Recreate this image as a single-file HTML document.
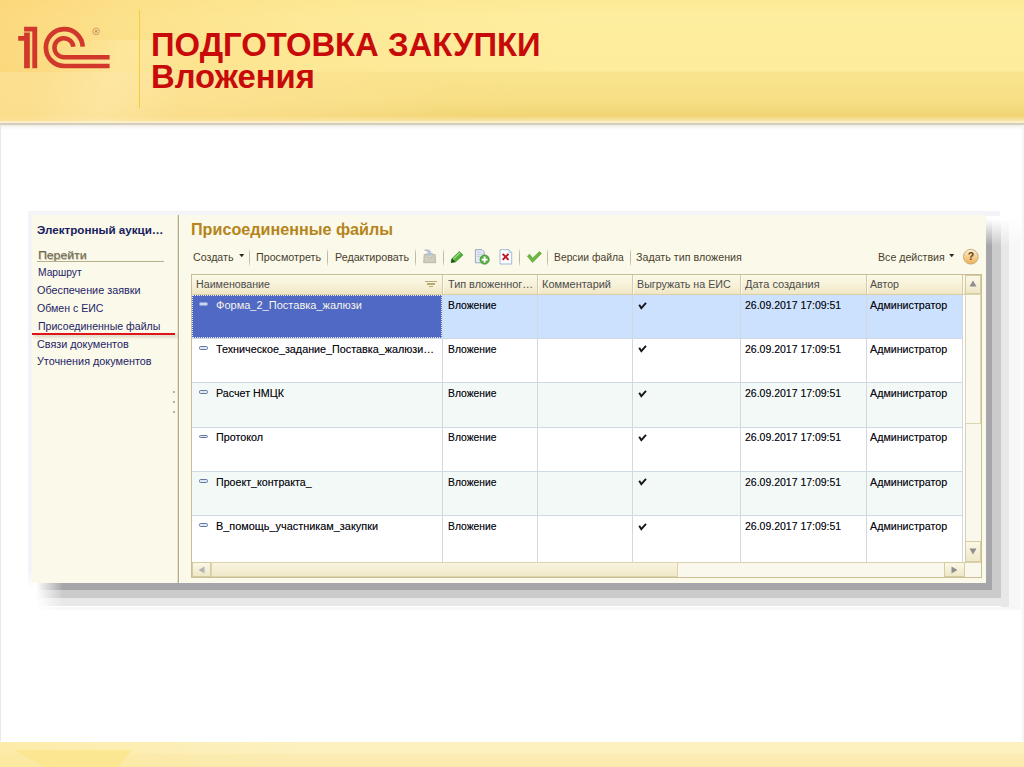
<!DOCTYPE html>
<html lang="ru"><head><meta charset="utf-8"><title>Подготовка закупки — Вложения</title>
<style>
*{margin:0;padding:0;box-sizing:border-box}
html,body{width:1024px;height:767px;overflow:hidden;background:#fff}
body{font-family:"Liberation Sans",sans-serif;position:relative}
.a,.t{position:absolute}
.t{white-space:nowrap;font-size:11.7px;line-height:14px;transform-origin:0 50%}
#hdr{left:0;top:0;width:1024px;height:121px;background:linear-gradient(to bottom,#fdea96 0,#fdee9f 18px,#fdec9b 71px,#f9e48d 72.5px,#f7df85 100px,#f1d574 116px,#f3dc8c 118px,#f8e6a8 121px)}
#hdrL{left:0;top:0;width:560px;height:121px;background:linear-gradient(to right,rgba(250,200,100,.55) 0,rgba(252,212,120,.45) 140px,rgba(253,222,135,.28) 320px,rgba(253,230,150,0) 560px)}
#hline1{left:0;top:120.8px;width:1024px;height:2px;background:#fcefc8}
#hline2{left:0;top:122.7px;width:1024px;height:7px;background:linear-gradient(to bottom,#d2ccbc 0,#d6d0c2 2px,#f4f2ec 2.6px,#ffffff 7px)}
#vbar{left:139px;top:10px;width:1px;height:98px;background:#f5cd3a}
.ttl{left:151px;color:#c80a0a;font-weight:bold;font-size:32.8px;line-height:32px;white-space:nowrap}
#foot{left:0;top:741.5px;width:1024px;height:26px;background:linear-gradient(to bottom,#fdf1c2 0,#fdf0be 11px,#fbecb3 12.5px,#fbeaae 26px)}
#lb{left:0;top:125px;width:1px;height:616px;background:#e8e8e8}
#rb{left:1022px;top:125px;width:2px;height:616px;background:#f5f5f5}
#shot{left:32px;top:215.3px;width:954.2px;height:368.1px;background:#fbf9ea}
.sep{width:1px;top:248.5px;height:17.5px;background:linear-gradient(to bottom,rgba(190,186,165,.2),#bfbba6 25%,#bfbba6 75%,rgba(190,186,165,.2))}
.vl{width:1px;background:#d0d8e0}
.hl{height:1px;background:#d0d8e0;left:192px;width:770px}
</style></head><body>
<div id="hdr" class="a"></div>
<div id="hdrL" class="a"></div>
<div class="a" style="left:0;top:72px;width:460px;height:49px;background:linear-gradient(to right,rgba(254,230,160,.62) 0,rgba(254,230,160,.5) 200px,rgba(254,230,160,0) 460px)"></div>
<div class="a" style="left:0;top:40px;width:260px;height:81px;background:linear-gradient(115deg,rgba(255,240,190,0) 20%,rgba(255,240,190,.35) 45%,rgba(255,240,190,0) 70%)"></div>
<div id="hline1" class="a"></div>
<div id="hline2" class="a"></div>
<div id="vbar" class="a"></div>
<svg class="a" style="left:0;top:0" width="130" height="90" viewBox="0 0 130 90">
 <g fill="#d1382b">
  <path d="M24.1 26.7H37.2V68.3H32.3V31.4H24.1Z"/>
  <path d="M18.2 36.1H24.1V32.5H29.8V68.3H24.1V40.8H18.2Z"/>
 </g>
 <g fill="none" stroke="#d1382b" stroke-width="4.7">
  <path d="M82.7 46.6A18.4 18.4 0 1 0 64.3 66H109.6"/>
  <path d="M73.4 46.8A9.5 9.5 0 1 0 63.9 57.2H109.6" stroke-width="4.5"/>
 </g>
 <circle cx="96.1" cy="31.4" r="3.3" fill="none" stroke="#c98a5e" stroke-width="0.8"/>
 <text x="96.1" y="33" font-size="4" text-anchor="middle" fill="#c07a50" font-family="Liberation Sans" font-weight="bold">R</text>
</svg>
<div class="a ttl" id="t1" style="top:28.6px">ПОДГОТОВКА ЗАКУПКИ</div>
<div class="a ttl" id="t2" style="top:60.5px">Вложения</div>
<div id="lb" class="a"></div><div id="rb" class="a"></div>
<div id="foot" class="a"></div>
<div class="a" style="left:0;top:741.5px;width:300px;height:26px;background:linear-gradient(to right,rgba(252,232,150,.55),rgba(252,232,150,0))"></div>
<div class="a" style="left:14px;top:750px;width:118px;height:17px;background:#fbe58c;opacity:.8;clip-path:polygon(0 0,100% 0,88% 100%,26% 100%)"></div>

<!-- soft frame + stepped shadow -->
<div class="a" style="left:28px;top:211px;width:972px;height:5px;background:#f4f3f8"></div>
<div class="a" style="left:28px;top:211px;width:5px;height:378px;background:linear-gradient(to bottom,#f4f3f8 0,#f4f3f8 360px,#fff 378px)"></div>
<div class="a" style="left:986.2px;top:219px;width:6.0px;height:370.8px;background:linear-gradient(to bottom,rgba(255,255,255,0) 0,#a6a6aa 27px)"></div>
<div class="a" style="left:36px;top:583.4px;width:950.2px;height:6.4px;background:linear-gradient(to right,rgba(255,255,255,0) 0,#a6a6aa 27px)"></div>
<div class="a" style="left:992.2px;top:219px;width:8.8px;height:379.2px;background:linear-gradient(to bottom,rgba(255,255,255,0) 0,#cbcbcb 27px)"></div>
<div class="a" style="left:36px;top:589.8px;width:956.2px;height:8.4px;background:linear-gradient(to right,rgba(255,255,255,0) 0,#cbcbcb 27px)"></div>
<div class="a" style="left:1001px;top:219px;width:7.5px;height:387.5px;background:linear-gradient(to bottom,rgba(255,255,255,0) 0,#e8e8e8 27px)"></div>
<div class="a" style="left:36px;top:598.2px;width:965.0px;height:8.3px;background:linear-gradient(to right,rgba(255,255,255,0) 0,#e8e8e8 27px)"></div>
<div class="a" style="left:1008.5px;top:219px;width:12.5px;height:391.0px;background:linear-gradient(to bottom,rgba(255,255,255,0) 0,#f7f7f7 27px)"></div>
<div class="a" style="left:36px;top:606.5px;width:972.5px;height:3.5px;background:linear-gradient(to right,rgba(255,255,255,0) 0,#f8f8f8 27px)"></div>
<div id="shot" class="a"></div>
<!-- sidebar divider -->
<div class="a" style="left:177px;top:215.3px;width:1px;height:368.1px;background:#e9e4cc"></div>
<div class="a" style="left:178px;top:215.3px;width:1px;height:368.1px;background:#b3ab8a"></div>
<div class="a" style="left:179px;top:215.3px;width:1px;height:368.1px;background:#fffef6"></div>
<!-- "Перейти" underline -->
<div class="a" style="left:37px;top:261px;width:127px;height:1px;background:#b7ae8c"></div>
<!-- red annotation line -->
<div class="a" style="left:32px;top:333.3px;width:143px;height:1.6px;background:#e0151b;box-shadow:2px 2px 3px rgba(120,110,80,.35)"></div>
<!-- splitter dots -->
<div class="a" style="left:173px;top:391px;width:2px;height:2px;background:#b8b39c"></div>
<div class="a" style="left:173px;top:401px;width:2px;height:2px;background:#b8b39c"></div>
<div class="a" style="left:173px;top:411px;width:2px;height:2px;background:#b8b39c"></div>

<!-- toolbar separators -->
<div class="a sep" style="left:249px"></div>
<div class="a sep" style="left:327px"></div>
<div class="a sep" style="left:415px"></div>
<div class="a sep" style="left:443px"></div>
<div class="a sep" style="left:519px"></div>
<div class="a sep" style="left:547px"></div>
<div class="a sep" style="left:630px"></div>
<!-- dropdown arrows -->
<svg class="a" style="left:238.6px;top:254.2px" width="6" height="4"><path d="M0.2 0H5.2L2.7 3.3Z" fill="#2a2a2a"/></svg>
<svg class="a" style="left:948.9px;top:254.2px" width="6" height="4"><path d="M0.2 0H5.2L2.7 3.3Z" fill="#2a2a2a"/></svg>
<!-- toolbar icons -->
<svg class="a" style="left:420px;top:246px" width="125" height="22" viewBox="420 246 125 22">
 <defs>
  <linearGradient id="gq" x1="0" y1="0" x2="0" y2="1"><stop offset="0" stop-color="#faf1dd"/><stop offset=".45" stop-color="#f5d294"/><stop offset="1" stop-color="#efb25c"/></linearGradient>
  <linearGradient id="gp" x1="0" y1="0" x2="1" y2="1"><stop offset="0" stop-color="#7fd45a"/><stop offset="1" stop-color="#2f9a1e"/></linearGradient>
 </defs>
 <!-- inbox (disabled) -->
 <path d="M424.2 254.5H427L428 257.3H431.3L432.3 254.5H435.2L435.7 262.7H423.7Z" fill="#cfcdc0" stroke="#b3b1a2" stroke-width=".8"/>
 <path d="M424.4 250.2C428.5 249 431 250.5 430.6 253.2H432.6L429.6 256.6L426.6 253.2H428.6C428.8 251.4 427 250.6 424.4 250.2Z" fill="#b4c6d8" stroke="#9db1c6" stroke-width=".5"/>
 <!-- pencil -->
 <path d="M451 262.5L452 258.6L459.4 251.6L462.9 255.1L455.4 261.9Z" fill="url(#gp)" stroke="#2f8a22" stroke-width=".7"/>
 <path d="M451 262.5L452 258.6L455.4 261.9Z" fill="#27481f"/>
 <path d="M453.4 258.9L460 252.9" stroke="#b9f09a" stroke-width="1" fill="none"/>
 <!-- doc + plus -->
 <path d="M475.4 249.6H482L484.2 251.8V262.8H475.4Z" fill="#e4ebf2" stroke="#8fa1b8" stroke-width=".9"/>
 <path d="M477 252.2H481M477 254.4H482.5M477 256.6H480" stroke="#b7c4d4" stroke-width=".8"/>
 <circle cx="484.6" cy="259.6" r="4.6" fill="#57b044" stroke="#3d8a30" stroke-width=".8"/>
 <path d="M484.6 256.6V262.6M481.6 259.6H487.6" stroke="#fff" stroke-width="1.9"/>
 <!-- doc + red x -->
 <path d="M500 249.7H509L511.7 252.4V264H500Z" fill="#fdfeff" stroke="#9fbad8" stroke-width="1"/>
 <path d="M509 249.7V252.4H511.7" fill="none" stroke="#9fbad8" stroke-width=".8"/>
 <path d="M502.6 253.9L508.6 259.9M508.6 253.9L502.6 259.9" stroke="#c3172a" stroke-width="2"/>
 <!-- green check -->
 <path d="M527.4 256.2L529.6 254.2L532.6 258.2L539.4 251.6L541.5 253.4L532.6 262.6Z" fill="#6db83f" stroke="#4f9a2c" stroke-width=".6"/>
</svg>
<!-- help -->
<svg class="a" style="left:962px;top:248px" width="18" height="18" viewBox="0 0 18 18">
 <circle cx="8.8" cy="8.7" r="7.4" fill="url(#gq)" stroke="#c7a774" stroke-width=".9"/>
 <text x="8.9" y="12.3" font-size="10.5" font-weight="bold" text-anchor="middle" fill="#6b3d14" font-family="Liberation Sans, sans-serif">?</text>
</svg>


<!-- table -->
<div class="a" id="tbl" style="left:191px;top:274px;width:791px;height:304px;background:#fff;border:1px solid #c9be92"></div>
<div class="a" id="thead" style="left:192px;top:275px;width:789px;height:19.5px;background:linear-gradient(to bottom,#fcf9e9 0,#f6f0d6 55%,#eee5c2 100%)"></div>
<!-- rows -->
<div class="a" style="left:192px;top:294.5px;width:770px;height:43.7px;background:#cbe1fd"></div>
<div class="a" style="left:192px;top:294.5px;width:250px;height:43.7px;background:#4f69c4;outline:1px dotted #e8ecff;outline-offset:-1px"></div>
<div class="a" style="left:192px;top:382.7px;width:770px;height:44.3px;background:#f3f9f6"></div>
<div class="a" style="left:192px;top:471.3px;width:770px;height:44.2px;background:#f3f9f6"></div>
<!-- horizontal grid -->
<div class="a hl" style="top:338px"></div>
<div class="a hl" style="top:382px"></div>
<div class="a hl" style="top:427px"></div>
<div class="a hl" style="top:471px"></div>
<div class="a hl" style="top:515px"></div>
<!-- vertical grid -->
<div class="a vl" style="left:442px;top:275px;height:287px"></div>
<div class="a vl" style="left:537px;top:275px;height:287px"></div>
<div class="a vl" style="left:632px;top:275px;height:287px"></div>
<div class="a vl" style="left:740px;top:275px;height:287px"></div>
<div class="a vl" style="left:866px;top:275px;height:287px"></div>
<div class="a vl" style="left:962px;top:275px;height:287px"></div>
<!-- header vertical separators -->
<div class="a" style="left:442px;top:275px;width:1px;height:19px;background:#d3cba6"></div><div class="a" style="left:443px;top:275px;width:1px;height:19px;background:#fdfbf0"></div><div class="a" style="left:537px;top:275px;width:1px;height:19px;background:#d3cba6"></div><div class="a" style="left:538px;top:275px;width:1px;height:19px;background:#fdfbf0"></div><div class="a" style="left:632px;top:275px;width:1px;height:19px;background:#d3cba6"></div><div class="a" style="left:633px;top:275px;width:1px;height:19px;background:#fdfbf0"></div><div class="a" style="left:740px;top:275px;width:1px;height:19px;background:#d3cba6"></div><div class="a" style="left:741px;top:275px;width:1px;height:19px;background:#fdfbf0"></div><div class="a" style="left:866px;top:275px;width:1px;height:19px;background:#d3cba6"></div><div class="a" style="left:867px;top:275px;width:1px;height:19px;background:#fdfbf0"></div><div class="a" style="left:962px;top:275px;width:1px;height:19px;background:#d3cba6"></div><div class="a" style="left:963px;top:275px;width:1px;height:19px;background:#fdfbf0"></div>
<div class="a" style="left:192px;top:294px;width:789px;height:1px;background:#d8cfa8"></div>
<!-- v scrollbar -->
<div class="a" style="left:965px;top:275px;width:16px;height:287px;background:#faf8ec;border-left:1px solid #d9d1ad"></div>
<div class="a" style="left:965px;top:275px;width:16px;height:19px;background:linear-gradient(#fbf8e8,#efe7c6);border:1px solid #d5cca4"></div>
<div class="a" style="left:965px;top:294px;width:16px;height:130px;background:#fbf9ee;border:1px solid #ddd5b2"></div>
<div class="a" style="left:965px;top:541px;width:16px;height:21px;background:linear-gradient(#fbf8e8,#efe7c6);border:1px solid #d5cca4"></div>
<svg class="a" style="left:969px;top:280px" width="8" height="7"><path d="M4 0.5L7.5 6.5H0.5Z" fill="#8e8e8e"/></svg>
<svg class="a" style="left:969px;top:548px" width="8" height="7"><path d="M0.5 0.5H7.5L4 6.5Z" fill="#8e8e8e"/></svg>
<!-- h scrollbar -->
<div class="a" style="left:192px;top:562px;width:789px;height:15px;background:#faf8ec;border-top:1px solid #d9d1ad"></div>
<div class="a" style="left:211px;top:562px;width:467px;height:15px;background:linear-gradient(#f9f4df,#f0e8c8);border:1px solid #ddd4ae"></div>
<div class="a" style="left:192px;top:562px;width:19px;height:15px;background:linear-gradient(#fbf8e8,#efe7c6);border:1px solid #d5cca4"></div>
<div class="a" style="left:944px;top:562px;width:21px;height:15px;background:linear-gradient(#fbf8e8,#efe7c6);border:1px solid #d5cca4"></div>
<svg class="a" style="left:198px;top:566px" width="7" height="8"><path d="M6.5 0.5V7.5L0.5 4Z" fill="#b5b5b5"/></svg>
<svg class="a" style="left:951px;top:566px" width="7" height="8"><path d="M0.5 0.5V7.5L6.5 4Z" fill="#8e8e8e"/></svg>
<!-- sort icon in header -->
<div class="a" style="left:425px;top:280.6px;width:11.5px;height:1.4px;background:#b6ab72"></div>
<div class="a" style="left:427px;top:283.2px;width:7.5px;height:1.4px;background:#b6ab72"></div>
<div class="a" style="left:428.7px;top:285.8px;width:4.1px;height:1.4px;background:#b6ab72"></div>

<div class="a" style="left:199px;top:302.2px;width:9.2px;height:3.6px;border-radius:1.6px;background:#c9d6ee;border:0.6px solid #8fa3d8"></div>
<svg class="a" style="left:637px;top:300.5px" width="12" height="10" viewBox="0 0 12 10"><path d="M2.2 3.8L4.3 7.2L9 1.9" fill="none" stroke="#151515" stroke-width="1.9" stroke-linejoin="miter"/></svg>
<div class="a" style="left:199px;top:345.9px;width:9.2px;height:3.8px;border-radius:1.6px;background:#dfe8f5;border:1px solid #64779f"></div>
<svg class="a" style="left:637px;top:344.2px" width="12" height="10" viewBox="0 0 12 10"><path d="M2.2 3.8L4.3 7.2L9 1.9" fill="none" stroke="#151515" stroke-width="1.9" stroke-linejoin="miter"/></svg>
<div class="a" style="left:199px;top:390.4px;width:9.2px;height:3.8px;border-radius:1.6px;background:#dfe8f5;border:1px solid #64779f"></div>
<svg class="a" style="left:637px;top:388.7px" width="12" height="10" viewBox="0 0 12 10"><path d="M2.2 3.8L4.3 7.2L9 1.9" fill="none" stroke="#151515" stroke-width="1.9" stroke-linejoin="miter"/></svg>
<div class="a" style="left:199px;top:434.7px;width:9.2px;height:3.8px;border-radius:1.6px;background:#dfe8f5;border:1px solid #64779f"></div>
<svg class="a" style="left:637px;top:433.0px" width="12" height="10" viewBox="0 0 12 10"><path d="M2.2 3.8L4.3 7.2L9 1.9" fill="none" stroke="#151515" stroke-width="1.9" stroke-linejoin="miter"/></svg>
<div class="a" style="left:199px;top:479.0px;width:9.2px;height:3.8px;border-radius:1.6px;background:#dfe8f5;border:1px solid #64779f"></div>
<svg class="a" style="left:637px;top:477.3px" width="12" height="10" viewBox="0 0 12 10"><path d="M2.2 3.8L4.3 7.2L9 1.9" fill="none" stroke="#151515" stroke-width="1.9" stroke-linejoin="miter"/></svg>
<div class="a" style="left:199px;top:523.2px;width:9.2px;height:3.8px;border-radius:1.6px;background:#dfe8f5;border:1px solid #64779f"></div>
<svg class="a" style="left:637px;top:521.5px" width="12" height="10" viewBox="0 0 12 10"><path d="M2.2 3.8L4.3 7.2L9 1.9" fill="none" stroke="#151515" stroke-width="1.9" stroke-linejoin="miter"/></svg>
<div class="t" style="left:37.2px;top:223.43px;color:#16205e;font-weight:bold;transform:scaleX(0.9953);">Электронный аукци…</div>
<div class="t" style="left:37.5px;top:247.83px;color:#6e684f;transform:scaleX(1.0472);text-shadow:0.6px 0.6px 0 #b9b39a;">Перейти</div>
<div class="t" style="left:37.5px;top:265.33px;color:#1b2466;transform:scaleX(0.8773);">Маршрут</div>
<div class="t" style="left:37.2px;top:283.33px;color:#1b2466;transform:scaleX(0.9267);">Обеспечение заявки</div>
<div class="t" style="left:37.2px;top:301.13px;color:#1b2466;transform:scaleX(0.9048);">Обмен с ЕИС</div>
<div class="t" style="left:37.5px;top:319.13px;color:#1b2466;transform:scaleX(0.9034);">Присоединенные файлы</div>
<div class="t" style="left:37.2px;top:336.73px;color:#1b2466;transform:scaleX(0.9245);">Связи документов</div>
<div class="t" style="left:37.3px;top:354.43px;color:#1b2466;transform:scaleX(0.9256);">Уточнения документов</div>
<div class="t" style="left:190.7px;top:218.79px;color:#b5841a;font-weight:bold;font-size:16.3px;line-height:20px;transform:scaleX(0.9919);">Присоединенные файлы</div>
<div class="t" style="left:193.2px;top:249.53px;color:#4a3f2d;transform:scaleX(0.9117);">Создать</div>
<div class="t" style="left:256.0px;top:249.53px;color:#4a3f2d;transform:scaleX(0.9163);">Просмотреть</div>
<div class="t" style="left:335.0px;top:249.53px;color:#4a3f2d;transform:scaleX(0.9166);">Редактировать</div>
<div class="t" style="left:554.0px;top:249.53px;color:#4a3f2d;transform:scaleX(0.8832);">Версии файла</div>
<div class="t" style="left:636.1px;top:249.53px;color:#4a3f2d;transform:scaleX(0.9155);">Задать тип вложения</div>
<div class="t" style="left:877.6px;top:249.53px;color:#4a3f2d;transform:scaleX(0.9075);">Все действия</div>
<div class="t" style="left:195.5px;top:277.13px;color:#4c4c4c;transform:scaleX(0.9132);">Наименование</div>
<div class="t" style="left:447.8px;top:277.13px;color:#4c4c4c;transform:scaleX(0.9294);">Тип вложенног…</div>
<div class="t" style="left:541.6px;top:277.13px;color:#4c4c4c;transform:scaleX(0.9372);">Комментарий</div>
<div class="t" style="left:636.9px;top:277.13px;color:#4c4c4c;transform:scaleX(0.9150);">Выгружать на ЕИС</div>
<div class="t" style="left:744.5px;top:277.13px;color:#4c4c4c;transform:scaleX(0.9417);">Дата создания</div>
<div class="t" style="left:870.3px;top:277.13px;color:#4c4c4c;transform:scaleX(0.9067);">Автор</div>
<div class="t" style="left:216.0px;top:297.93px;color:#ffffff;transform:scaleX(0.9434);text-shadow:0 0 .5px rgba(0,0,20,.45);">Форма_2_Поставка_жалюзи</div>
<div class="t" style="left:447.8px;top:297.93px;color:#0c0c12;transform:scaleX(0.8831);text-shadow:0 0 .5px rgba(0,0,20,.45);">Вложение</div>
<div class="t" style="left:744.5px;top:297.93px;color:#0c0c12;transform:scaleX(0.8970);text-shadow:0 0 .5px rgba(0,0,20,.45);">26.09.2017 17:09:51</div>
<div class="t" style="left:870.3px;top:297.93px;color:#0c0c12;transform:scaleX(0.9155);text-shadow:0 0 .5px rgba(0,0,20,.45);">Администратор</div>
<div class="t" style="left:216.0px;top:341.63px;color:#0c0c12;transform:scaleX(0.9221);text-shadow:0 0 .5px rgba(0,0,20,.45);">Техническое_задание_Поставка_жалюзи…</div>
<div class="t" style="left:447.8px;top:341.63px;color:#0c0c12;transform:scaleX(0.8831);text-shadow:0 0 .5px rgba(0,0,20,.45);">Вложение</div>
<div class="t" style="left:744.5px;top:341.63px;color:#0c0c12;transform:scaleX(0.8970);text-shadow:0 0 .5px rgba(0,0,20,.45);">26.09.2017 17:09:51</div>
<div class="t" style="left:870.3px;top:341.63px;color:#0c0c12;transform:scaleX(0.9155);text-shadow:0 0 .5px rgba(0,0,20,.45);">Администратор</div>
<div class="t" style="left:216.0px;top:386.13px;color:#0c0c12;transform:scaleX(0.9181);text-shadow:0 0 .5px rgba(0,0,20,.45);">Расчет НМЦК</div>
<div class="t" style="left:447.8px;top:386.13px;color:#0c0c12;transform:scaleX(0.8831);text-shadow:0 0 .5px rgba(0,0,20,.45);">Вложение</div>
<div class="t" style="left:744.5px;top:386.13px;color:#0c0c12;transform:scaleX(0.8970);text-shadow:0 0 .5px rgba(0,0,20,.45);">26.09.2017 17:09:51</div>
<div class="t" style="left:870.3px;top:386.13px;color:#0c0c12;transform:scaleX(0.9155);text-shadow:0 0 .5px rgba(0,0,20,.45);">Администратор</div>
<div class="t" style="left:216.0px;top:430.43px;color:#0c0c12;transform:scaleX(0.9201);text-shadow:0 0 .5px rgba(0,0,20,.45);">Протокол</div>
<div class="t" style="left:447.8px;top:430.43px;color:#0c0c12;transform:scaleX(0.8831);text-shadow:0 0 .5px rgba(0,0,20,.45);">Вложение</div>
<div class="t" style="left:744.5px;top:430.43px;color:#0c0c12;transform:scaleX(0.8970);text-shadow:0 0 .5px rgba(0,0,20,.45);">26.09.2017 17:09:51</div>
<div class="t" style="left:870.3px;top:430.43px;color:#0c0c12;transform:scaleX(0.9155);text-shadow:0 0 .5px rgba(0,0,20,.45);">Администратор</div>
<div class="t" style="left:216.0px;top:474.73px;color:#0c0c12;transform:scaleX(0.9102);text-shadow:0 0 .5px rgba(0,0,20,.45);">Проект_контракта_</div>
<div class="t" style="left:447.8px;top:474.73px;color:#0c0c12;transform:scaleX(0.8831);text-shadow:0 0 .5px rgba(0,0,20,.45);">Вложение</div>
<div class="t" style="left:744.5px;top:474.73px;color:#0c0c12;transform:scaleX(0.8970);text-shadow:0 0 .5px rgba(0,0,20,.45);">26.09.2017 17:09:51</div>
<div class="t" style="left:870.3px;top:474.73px;color:#0c0c12;transform:scaleX(0.9155);text-shadow:0 0 .5px rgba(0,0,20,.45);">Администратор</div>
<div class="t" style="left:216.0px;top:518.93px;color:#0c0c12;transform:scaleX(0.9320);text-shadow:0 0 .5px rgba(0,0,20,.45);">В_помощь_участникам_закупки</div>
<div class="t" style="left:447.8px;top:518.93px;color:#0c0c12;transform:scaleX(0.8831);text-shadow:0 0 .5px rgba(0,0,20,.45);">Вложение</div>
<div class="t" style="left:744.5px;top:518.93px;color:#0c0c12;transform:scaleX(0.8970);text-shadow:0 0 .5px rgba(0,0,20,.45);">26.09.2017 17:09:51</div>
<div class="t" style="left:870.3px;top:518.93px;color:#0c0c12;transform:scaleX(0.9155);text-shadow:0 0 .5px rgba(0,0,20,.45);">Администратор</div>
</body></html>
